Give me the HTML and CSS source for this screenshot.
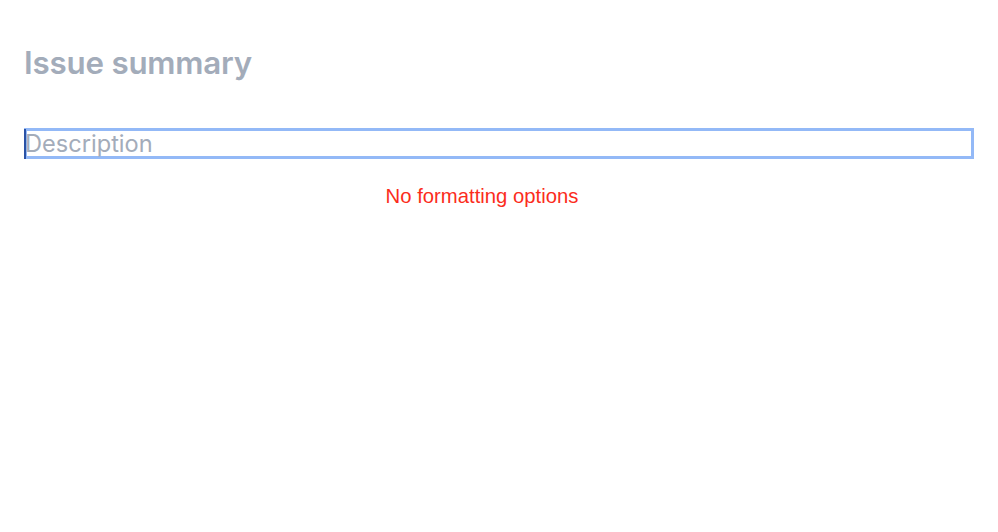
FILE: index.html
```html
<!DOCTYPE html>
<html>
<head>
<meta charset="utf-8">
<link rel="stylesheet" href="styles.css">
</head>
<body>
<div class="page">
  <h1 class="summary">Issue summary</h1>
  <div class="desc"><span class="caret"></span><span class="placeholder">Description</span></div>
  <p class="note">No formatting options</p>
</div>
</body>
</html>
```
FILE: styles.css
```css
html, body { margin: 0; padding: 0; background: #fff; }
.page { padding: 44px 24px 0 24px; font-family: Inter, "Liberation Sans", sans-serif; }
.summary {
  margin: 0;
  font-size: 31.3px;
  font-weight: 600;
  color: #a3acba;
  line-height: 38px;
  letter-spacing: -0.2px;
}
.desc {
  margin-top: 46px;
  height: 25px;
  border: 3px solid #93b9f7;
  display: flex;
  align-items: center;
  position: relative;
  width: 944px;
}
.caret {
  width: 2px;
  height: 30px;
  background: #2a52a6;
  margin-left: -3px;
  flex: none;
}
.placeholder {
  font-size: 23.6px;
  color: #a3acba;
  line-height: 25px;
  margin-left: -1px;
}
.note {
  margin: 26px 0 0 0;
  text-align: center;
  font-family: "Liberation Sans", Arial, sans-serif;
  font-size: 20.3px;
  color: #fb2c1c;
  padding-right: 34px;
}
```
